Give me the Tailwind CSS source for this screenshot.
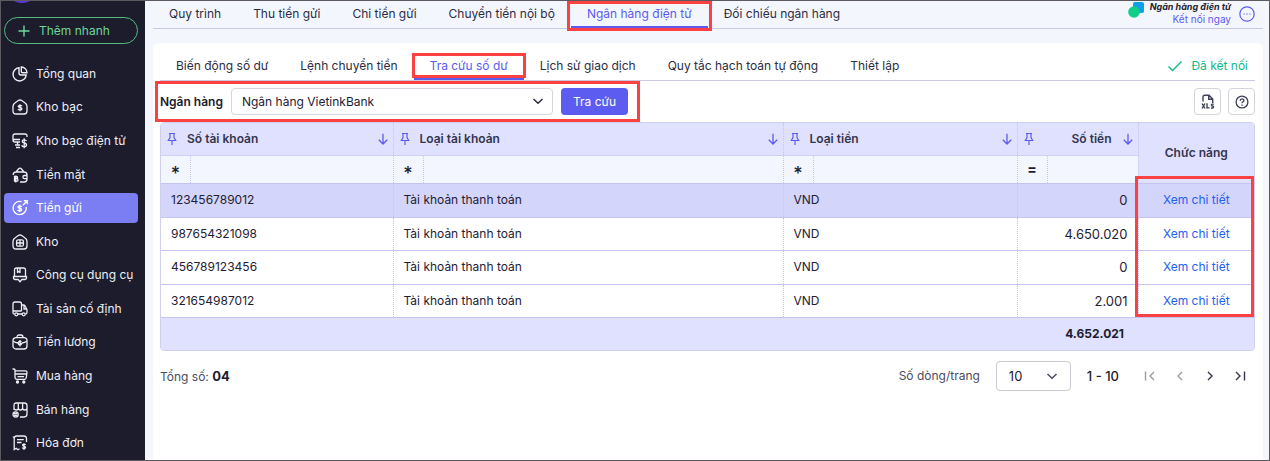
<!DOCTYPE html>
<html lang="vi">
<head>
    <meta charset="UTF-8">
    <meta name="viewport" content="width=device-width, initial-scale=1.0">
    <title>Ngân hàng điện tử - Tra cứu số dư</title>
    <script src="https://cdn.jsdelivr.net/npm/@tailwindcss/browser@4"></script>
</head>
<body class="flex min-h-screen border border-[#5c5a5e] bg-[#f4f6fe] font-['Inter',sans-serif] text-xs leading-5 text-[#2b2d42]">

    <!-- Sidebar -->
    <aside class="relative flex w-36 shrink-0 flex-col overflow-hidden bg-[#1c1c2d] text-[#eeeef5]">
        <div class="absolute -top-8 left-1 size-[34px] rounded-full bg-[#5b35d6]"></div>
        <button class="mt-4 mr-[7px] mb-[13px] ml-[3px] flex h-[27px] shrink-0 items-center gap-2 rounded-full border border-[#56bd80] pl-3 text-[#6fd79a]">
            <svg class="size-3.5" viewBox="0 0 14 14" fill="none" stroke="currentColor" stroke-width="1.4"><path d="M7 1.5v11M1.5 7h11"/></svg>
            Thêm nhanh
        </button>
        <nav class="flex flex-1 flex-col pr-[7px] pl-[3px]">
            <a href="#" class="my-0.5 flex flex-1 items-center gap-2 rounded pl-2">
                <svg class="size-4" viewBox="0 0 16 16" fill="none" stroke="currentColor" stroke-width="1.4"><path d="M7 1.800A6.600 6.600 0 1 0 14.200 9H9C7.700 9 7 8.300 7 7z"/><path d="M9.300 1v4.400c0 .8.400 1.300 1.300 1.300H15A6 6 0 0 0 9.300 1z"/></svg>
                Tổng quan
            </a>
            <a href="#" class="my-0.5 flex flex-1 items-center gap-2 rounded pl-2">
                <svg class="size-4" viewBox="0 0 16 16" fill="none" stroke="currentColor" stroke-width="1.3"><path d="M1 7.2C1 5.5 2 4.5 3.2 3.7L6.3 1.5c1.2-.7 2.2-.7 3.4 0l3.1 2.2C14 4.500 15 5.500 15 7.200V12c0 2-1 3-3 3H4c-2 0-3-1-3-3z"/><path d="M10 7.200C9.600 6.500 9 6.300 8 6.300c-2.300 0-2.400 2 0 2.200 2.600.3 2.500 2.500 0 2.500-1.200 0-1.800-.3-2.100-1M8 5.200v7"/></svg>
                Kho bạc
            </a>
            <a href="#" class="my-0.5 flex flex-1 items-center gap-2 rounded pl-2">
                <svg class="size-4" viewBox="0 0 16 16" fill="none" stroke="currentColor" stroke-width="1.3"><path d="M15 4V3c0-1.300-.7-2-2-2H3C1.700 1 1 1.700 1 3v4c0 1.300.7 2 2 2h5M1 6.500h7M5.500 9v3M3 12h5M4 14.500h4"/><path d="M14.500 8c-.5-.9-1.200-1.200-2.300-1.200-2.700 0-2.700 2.800 0 3.200 3.200.5 3 3.800 0 3.800-1.400 0-2.200-.5-2.500-1.500M12.200 5.300v10"/></svg>
                Kho bạc điện tử
            </a>
            <a href="#" class="my-0.5 flex flex-1 items-center gap-2 rounded pl-2">
                <svg class="size-4" viewBox="0 0 16 16" fill="none" stroke="currentColor" stroke-width="1.3"><path d="M1.200 8C1.200 6 2.500 5 4 5h8c2 0 3 1 3 3v4c0 2-1 3-3 3H8M4 5l2.500-3c1-1.200 2-1.200 3 0L12 5M15 8.500h-2.500a1.600 1.600 0 0 0 0 3.200H15"/><path d="M2.500 9.500h2c1.500 0 1.500 2.200 0 2.200h-2zM2.500 11.700h2.300c1.600 0 1.600 2.500 0 2.500H2.500zM3.800 8.500v7"/></svg>
                Tiền mặt
            </a>
            <a href="#" aria-current="page" class="my-0.5 flex flex-1 items-center gap-2 rounded bg-[#7b7df3] pl-2 text-white">
                <svg class="size-4" viewBox="0 0 16 16" fill="none" stroke="currentColor" stroke-width="1.400"><path d="M9.500 1.700A6.600 6.600 0 1 0 14.200 7"/><path d="M10.800 5.200l4-4M11.800.8H15.200V4.200"/><path d="M9.700 7c-.4-.8-1-1-2-1-2.300 0-2.300 2 0 2.300 2.600.3 2.500 2.600 0 2.600-1.200 0-1.800-.3-2.100-1M7.700 4.800v7.200"/></svg>
                Tiền gửi
            </a>
            <a href="#" class="my-0.5 flex flex-1 items-center gap-2 rounded pl-2">
                <svg class="size-4" viewBox="0 0 16 16" fill="none" stroke="currentColor" stroke-width="1.300"><path d="M1 7.200C1 5.500 2 4.500 3.200 3.700L6.300 1.500c1.200-.7 2.200-.7 3.400 0l3.100 2.200C14 4.500 15 5.500 15 7.200V12c0 2-1 3-3 3H4c-2 0-3-1-3-3z"/><rect x="4.600" y="5.800" width="6.800" height="6.400" rx="1.500"/><path d="M8 5.800v6.400M4.600 9h6.800"/></svg>
                Kho
            </a>
            <a href="#" class="my-0.5 flex flex-1 items-center gap-2 rounded pl-2">
                <svg class="size-4" viewBox="0 0 16 16" fill="none" stroke="currentColor" stroke-width="1.300" stroke-linejoin="round"><path d="M2.500 9V3c0-1.300.7-2 2-2h7c1.300 0 2 .7 2 2v6M5.500 1v4.500l1.300-1 1.200 1V1M1.500 9.500h13v1.300c0 1-.7 1.700-1.700 1.700H9.800L8 14.800l-1.800-2.300h-3c-1 0-1.700-.7-1.700-1.700z"/></svg>
                Công cụ dụng cụ
            </a>
            <a href="#" class="my-0.5 flex flex-1 items-center gap-2 rounded pl-2">
                <svg class="size-4" viewBox="0 0 16 16" fill="none" stroke="currentColor" stroke-width="1.300"><path d="M2.500 13C1.500 13 1 12.400 1 11.500V3c0-1.300.7-2 2-2h4.500c1.300 0 2 .7 2 2v7M1 10h8.500M9.500 4h2c.8 0 1.200.3 1.600 1l1.500 2.800c.3.500.4.800.4 1.400v2c0 1.200-.6 1.800-1.500 1.800M12 4v4h2.700M6 13h4"/><circle cx="4.300" cy="13.300" r="1.500"/><circle cx="11.700" cy="13.300" r="1.500"/></svg>
                Tài sản cố định
            </a>
            <a href="#" class="my-0.5 flex flex-1 items-center gap-2 rounded pl-2">
                <svg class="size-4" viewBox="0 0 16 16" fill="none" stroke="currentColor" stroke-width="1.300"><rect x="1" y="3.700" width="14" height="11.300" rx="3"/><path d="M5 3.500C5 1.700 5.600 1 7 1h2c1.400 0 2 .7 2 2.500M1.200 7.300c1.600 1 3 1.500 4.800 1.700M14.800 7.300c-1.600 1-3 1.500-4.800 1.700"/><path d="M9.300 8c-.8-1.200-3-.9-3 1.200s2.600 2.300 3.100.8V9.400H8M8 6v6.500"/></svg>
                Tiền lương
            </a>
            <a href="#" class="my-0.5 flex flex-1 items-center gap-2 rounded pl-2">
                <svg class="size-4" viewBox="0 0 16 16" fill="none" stroke="currentColor" stroke-width="1.300"><path d="M.5 1h1.300c.8 0 1.200.4 1.200 1.200V9.500c0 1.200.7 1.800 1.800 1.800h7.800c1 0 1.500-.5 1.600-1.500L15 4.500c0-1-.4-1.600-1.500-1.600H3.200M3.200 6h11.500M5.500 8.700h6.500"/><circle cx="5.500" cy="14" r="1" fill="currentColor"/><circle cx="11.800" cy="14" r="1" fill="currentColor"/></svg>
                Mua hàng
            </a>
            <a href="#" class="my-0.5 flex flex-1 items-center gap-2 rounded pl-2">
                <svg class="size-4" viewBox="0 0 16 16" fill="none" stroke="currentColor" stroke-width="1.300"><path d="M2 8V3.500C2 1.800 2.700 1 4.300 1h7.900C14 1 15 1.800 15 3.500v8.300c0 2.200-1 3.200-3 3.200H8M6.300 1v5c0 1.300-.8 2-2 2S2 7.300 2 6M6.300 6c0 1.300.8 2 2.100 2s2.200-.7 2.200-2V1M10.600 6c0 1.300.8 2 2.200 2S15 7.300 15 6"/><circle cx="3.600" cy="12.400" r="2.600"/><path d="M2 11.500h3.300M2 13.300h3.300"/></svg>
                Bán hàng
            </a>
            <a href="#" class="my-0.5 flex flex-1 items-center gap-2 rounded pl-2">
                <svg class="size-4" viewBox="0 0 16 16" fill="none" stroke="currentColor" stroke-width="1.300"><path d="M14.500 7V3.500C14.500 2 13.700 1 12 1H4.500C3 1 2.200 1.800 2.200 3.300V14.500l2-1.300 1.700 1.500 1.600-1M.8 2.200H2.200M5 4.700h6.800M5 7.500h4.500"/><path d="M13.500 10c-.3-.6-.8-.8-1.500-.8-1.900 0-1.800 1.700 0 2 2 .3 2 2.300 0 2.300-.9 0-1.500-.3-1.700-1M12 8.200v6.800"/></svg>
                Hóa đơn
            </a>
        </nav>
    </aside>

    <main class="flex min-w-0 flex-1 flex-col pr-1.5 pl-2">
        <!-- Main tabs -->
        <header class="flex h-7 items-stretch border-b border-[#c9cadf]">
            <nav class="flex">
                <a href="#" class="px-4 pt-[3px]">Quy trình</a>
                <a href="#" class="px-4 pt-[3px]">Thu tiền gửi</a>
                <a href="#" class="px-4 pt-[3px]">Chi tiền gửi</a>
                <a href="#" class="px-4 pt-[3px]">Chuyển tiền nội bộ</a>
                <a href="#" aria-current="page" class="relative border-b-2 border-[#5b5bf0] px-4 pt-[3px] text-[#5b5bf0]">
                    Ngân hàng điện tử
                    <span class="pointer-events-none absolute -inset-x-1 top-0 -bottom-[5px] border-3 border-[#fb4142]"></span>
                </a>
                <a href="#" class="px-4 pt-[3px]">Đối chiếu ngân hàng</a>
            </nav>
            <div class="ml-auto flex items-start gap-2 pr-2">
                <svg class="mt-px size-4" viewBox="0 0 16 16"><rect x="5" width="11" height="11" rx="2" fill="#119fe6"/><circle cx="6" cy="10" r="5.800" fill="#0fce87"/></svg>
                <div class="-ml-0.5 text-right">
                    <div class="text-[9px] leading-3 font-bold text-[#242432] italic">Ngân hàng điện tử</div>
                    <a href="#" class="block text-[10px] leading-3 text-[#5b5bf0]">Kết nối ngay</a>
                </div>
                <button aria-label="Thêm" class="mt-[5px] text-[#5b5bf0]">
                    <svg class="size-4" viewBox="0 0 16 16" fill="none" stroke="currentColor" stroke-width="1.200"><circle cx="8" cy="8" r="7.200"/><path d="M4.500 8h1.200M7.400 8h1.200M10.300 8h1.200"/></svg>
                </button>
            </div>
        </header>

        <section class="mt-3.5 flex-1 rounded-t-md bg-white pr-2 pl-[7px]">
            <!-- Sub tabs -->
            <div class="flex h-[38px] border-b border-[#c9cadf]">
                <nav class="flex">
                    <a href="#" class="px-4 pt-[13px]">Biến động số dư</a>
                    <a href="#" class="px-4 pt-[13px]">Lệnh chuyển tiền</a>
                    <a href="#" aria-current="page" class="relative border-b-2 border-[#5b5bf0] px-4 pt-[13px] text-[#5b5bf0]">
                        Tra cứu số dư
                        <span class="pointer-events-none absolute -inset-x-0.5 top-2.5 bottom-0 border-3 border-[#fb4142]"></span>
                    </a>
                    <a href="#" class="px-4 pt-[13px]">Lịch sử giao dịch</a>
                    <a href="#" class="px-4 pt-[13px]">Quy tắc hạch toán tự động</a>
                    <a href="#" class="px-4 pt-[13px]">Thiết lập</a>
                </nav>
                <div class="ml-auto flex items-center gap-2 pt-2 pr-[7px] text-[#0fb98b]">
                    <svg class="size-4" viewBox="0 0 16 16" fill="none" stroke="currentColor" stroke-width="1.400"><path d="M1.500 8.500l4 4 9-9"/></svg>
                    Đã kết nối
                </div>
            </div>

            <!-- Filter -->
            <div class="flex items-center justify-between py-[7px]">
                <div class="relative flex items-center">
                    <label for="bank" class="mr-2 font-semibold text-[#1b1c2e]">Ngân hàng</label>
                    <div class="relative">
                        <select id="bank" class="h-[27px] w-[322px] appearance-none rounded border border-[#d5d6de] bg-white px-2.5 text-[#1f2033]">
                            <option>Ngân hàng VietinkBank</option>
                        </select>
                        <svg class="pointer-events-none absolute top-1.5 right-2 size-3.5" viewBox="0 0 14 14" fill="none" stroke="currentColor" stroke-width="1.500"><path d="M2.500 5L7 9.300 11.500 5"/></svg>
                    </div>
                    <button class="ml-2 h-[27px] rounded bg-[#5c5cf0] px-3 text-white">Tra cứu</button>
                    <span class="pointer-events-none absolute -inset-x-3 -inset-y-[7px] -left-[5px] border-3 border-[#fb4142]"></span>
                </div>
                <div class="flex gap-[7px]">
                    <button aria-label="Xuất Excel" class="flex size-[27px] items-center justify-center rounded border border-[#d3d4dc]">
                        <svg class="size-4" viewBox="0 0 16 16" fill="none" stroke="#3d4057" stroke-width="1.400"><path d="M3 7.500V3c0-1.200.6-1.800 1.800-1.800H9L12.700 5v4M8.700 1.200V5.300h4"/><path d="M2 9.500l3 5M5 9.500l-3 5M7 9.200v4.700h2.500M13.800 10.100h-1.300c-1.500 0-1.500 1.900 0 1.900s1.500 2 0 2H11"/></svg>
                    </button>
                    <button aria-label="Trợ giúp" class="flex size-[27px] items-center justify-center rounded border border-[#d3d4dc]">
                        <svg class="size-3.5" viewBox="0 0 14 14" fill="none" stroke="#3d4057" stroke-width="1.300"><circle cx="7" cy="7" r="5.900"/><path d="M5.200 5.700c0-2.500 3.700-2.500 3.700-.2C8.900 6.800 7 6.800 7 8.300M7 9.500v1.200"/></svg>
                    </button>
                </div>
            </div>

            <!-- Balance table -->
            <div class="relative overflow-hidden rounded border border-[#cfd0ee]">
                <table class="w-full table-fixed border-collapse">
                    <colgroup>
                        <col class="w-[232px]">
                        <col>
                        <col class="w-[234px]">
                        <col class="w-[121px]">
                        <col class="w-[116px]">
                    </colgroup>
                    <thead class="bg-[#e0e1fe] text-left text-[#33354e]">
                        <tr class="h-8">
                            <th class="border-r border-dotted border-[#c4c5f3] px-1 font-semibold">
                                <div class="flex items-center">
                                    <svg class="mr-2 size-3.5 text-[#5b5bf0]" viewBox="0 0 14 14" fill="none" stroke="currentColor" stroke-width="1.200"><path d="M4 1.500h6M5 1.500v4L3.300 8.500h7.400L9 5.500v-4M7 8.500v4.500"/></svg>
                                    Số tài khoản
                                    <svg class="ml-auto size-3 text-[#5b5bf0]" viewBox="0 0 12 12" fill="none" stroke="currentColor" stroke-width="1.300"><path d="M6 .8v10M1.800 6.800L6 11l4.200-4.200"/></svg>
                                </div>
                            </th>
                            <th class="border-r border-dotted border-[#c4c5f3] px-1 font-semibold">
                                <div class="flex items-center">
                                    <svg class="mr-2 size-3.5 text-[#5b5bf0]" viewBox="0 0 14 14" fill="none" stroke="currentColor" stroke-width="1.200"><path d="M4 1.500h6M5 1.500v4L3.300 8.500h7.400L9 5.500v-4M7 8.500v4.500"/></svg>
                                    Loại tài khoản
                                    <svg class="ml-auto size-3 text-[#5b5bf0]" viewBox="0 0 12 12" fill="none" stroke="currentColor" stroke-width="1.300"><path d="M6 .8v10M1.800 6.800L6 11l4.200-4.200"/></svg>
                                </div>
                            </th>
                            <th class="border-r border-dotted border-[#c4c5f3] px-1 font-semibold">
                                <div class="flex items-center">
                                    <svg class="mr-2 size-3.5 text-[#5b5bf0]" viewBox="0 0 14 14" fill="none" stroke="currentColor" stroke-width="1.200"><path d="M4 1.500h6M5 1.500v4L3.300 8.500h7.400L9 5.500v-4M7 8.500v4.500"/></svg>
                                    Loại tiền
                                    <svg class="ml-auto size-3 text-[#5b5bf0]" viewBox="0 0 12 12" fill="none" stroke="currentColor" stroke-width="1.300"><path d="M6 .8v10M1.800 6.800L6 11l4.200-4.200"/></svg>
                                </div>
                            </th>
                            <th class="border-r border-dotted border-[#c4c5f3] px-1 font-semibold">
                                <div class="flex items-center">
                                    <svg class="mr-auto size-3.5 text-[#5b5bf0]" viewBox="0 0 14 14" fill="none" stroke="currentColor" stroke-width="1.200"><path d="M4 1.500h6M5 1.500v4L3.300 8.500h7.400L9 5.500v-4M7 8.500v4.500"/></svg>
                                    Số tiền
                                    <svg class="ml-2.5 size-3 text-[#5b5bf0]" viewBox="0 0 12 12" fill="none" stroke="currentColor" stroke-width="1.300"><path d="M6 .8v10M1.800 6.800L6 11l4.200-4.200"/></svg>
                                </div>
                            </th>
                            <th rowspan="2" class="text-center font-semibold">Chức năng</th>
                        </tr>
                        <tr class="h-7 border-t border-[#cfd0f4] bg-[#f3f6fe]">
                            <td class="border-r border-dotted border-r-[#c4c5f3] p-0">
                                <div class="flex h-[27px]">
                                    <button class="w-[30px] border-r border-dotted border-[#c4c5f3] pt-1 text-lg font-medium text-[#1b1c2e]">*</button>
                                    <input type="text" aria-label="Lọc số tài khoản" class="min-w-0 flex-1 px-2 outline-none">
                                </div>
                            </td>
                            <td class="border-r border-dotted border-r-[#c4c5f3] p-0">
                                <div class="flex h-[27px]">
                                    <button class="w-[30px] border-r border-dotted border-[#c4c5f3] pt-1 text-lg font-medium text-[#1b1c2e]">*</button>
                                    <input type="text" aria-label="Lọc loại tài khoản" class="min-w-0 flex-1 px-2 outline-none">
                                </div>
                            </td>
                            <td class="border-r border-dotted border-r-[#c4c5f3] p-0">
                                <div class="flex h-[27px]">
                                    <button class="w-[30px] border-r border-dotted border-[#c4c5f3] pt-1 text-lg font-medium text-[#1b1c2e]">*</button>
                                    <input type="text" aria-label="Lọc loại tiền" class="min-w-0 flex-1 px-2 outline-none">
                                </div>
                            </td>
                            <td class="border-r border-dotted border-r-[#c4c5f3] p-0">
                                <div class="flex h-[27px]">
                                    <button class="w-[30px] border-r border-dotted border-[#c4c5f3] text-sm font-bold text-[#1b1c2e]">=</button>
                                    <input type="text" aria-label="Lọc số tiền" class="min-w-0 flex-1 px-2 outline-none">
                                </div>
                            </td>
                        </tr>
                    </thead>
                    <tbody class="text-[#1f2033]">
                        <tr class="border-y border-[#c4c5f3] bg-[#d4d5fb] odd:h-[34px] even:h-[33px]">
                            <td class="border-r border-dotted border-r-[#c4c5f3] px-2.5">123456789012</td>
                            <td class="border-r border-dotted border-r-[#c4c5f3] px-2.5">Tài khoản thanh toán</td>
                            <td class="border-r border-dotted border-r-[#c4c5f3] px-2.5">VND</td>
                            <td class="border-r border-dotted border-r-[#c4c5f3] px-2.5 text-right text-[13px]">0</td>
                            <td class="text-center"><a href="#" class="text-[#1d62f0]">Xem chi tiết</a></td>
                        </tr>
                        <tr class="border-y border-[#c4c5f3] odd:h-[34px] even:h-[33px]">
                            <td class="border-r border-dotted border-r-[#c4c5f3] px-2.5">987654321098</td>
                            <td class="border-r border-dotted border-r-[#c4c5f3] px-2.5">Tài khoản thanh toán</td>
                            <td class="border-r border-dotted border-r-[#c4c5f3] px-2.5">VND</td>
                            <td class="border-r border-dotted border-r-[#c4c5f3] px-2.5 text-right text-[13px]">4.650.020</td>
                            <td class="text-center"><a href="#" class="text-[#1d62f0]">Xem chi tiết</a></td>
                        </tr>
                        <tr class="border-y border-[#c4c5f3] odd:h-[34px] even:h-[33px]">
                            <td class="border-r border-dotted border-r-[#c4c5f3] px-2.5">456789123456</td>
                            <td class="border-r border-dotted border-r-[#c4c5f3] px-2.5">Tài khoản thanh toán</td>
                            <td class="border-r border-dotted border-r-[#c4c5f3] px-2.5">VND</td>
                            <td class="border-r border-dotted border-r-[#c4c5f3] px-2.5 text-right text-[13px]">0</td>
                            <td class="text-center"><a href="#" class="text-[#1d62f0]">Xem chi tiết</a></td>
                        </tr>
                        <tr class="border-y border-[#c4c5f3] odd:h-[34px] even:h-[33px]">
                            <td class="border-r border-dotted border-r-[#c4c5f3] px-2.5">321654987012</td>
                            <td class="border-r border-dotted border-r-[#c4c5f3] px-2.5">Tài khoản thanh toán</td>
                            <td class="border-r border-dotted border-r-[#c4c5f3] px-2.5">VND</td>
                            <td class="border-r border-dotted border-r-[#c4c5f3] px-2.5 text-right text-[13px]">2.001</td>
                            <td class="text-center"><a href="#" class="text-[#1d62f0]">Xem chi tiết</a></td>
                        </tr>
                    </tbody>
                    <tfoot>
                        <tr class="h-[33px] bg-[#e0e1fe] font-bold text-[#1b1c2e]">
                            <td colspan="4" class="px-3.5 text-right">4.652.021</td>
                            <td></td>
                        </tr>
                    </tfoot>
                </table>
                <span class="pointer-events-none absolute right-0 bottom-[33px] h-[141px] w-[119px] border-3 border-[#fb4142]"></span>
            </div>

            <!-- Paging -->
            <div class="mt-2.5 flex items-center justify-between text-[#4a4c60]">
                <div>Tổng số: <b class="text-[13px] font-bold text-[#1b1c2e]">04</b></div>
                <div class="flex items-center">
                    <label for="size" class="mr-4">Số dòng/trang</label>
                    <div class="relative">
                        <select id="size" class="h-[30px] w-[75px] appearance-none rounded border border-[#c9cad6] bg-white px-3 text-[13px] text-[#1f2033]">
                            <option>10</option>
                            <option>20</option>
                            <option>50</option>
                        </select>
                        <svg class="pointer-events-none absolute top-2 right-3 size-3.5" viewBox="0 0 14 14" fill="none" stroke="currentColor" stroke-width="1.500"><path d="M2.500 5L7 9.300 11.500 5"/></svg>
                    </div>
                    <span class="ml-4 text-[13px] font-medium text-[#1b1c2e]">1 - 10</span>
                    <div class="ml-6 flex gap-4 pr-2">
                        <button aria-label="Trang đầu" class="text-[#9a9bab]"><svg class="size-3.5" viewBox="0 0 14 14" fill="none" stroke="currentColor" stroke-width="1.400"><path d="M2.500 2.500v9M11 3L7 7l4 4"/></svg></button>
                        <button aria-label="Trang trước" class="text-[#9a9bab]"><svg class="size-3.5" viewBox="0 0 14 14" fill="none" stroke="currentColor" stroke-width="1.400"><path d="M9 3L5 7l4 4"/></svg></button>
                        <button aria-label="Trang sau" class="text-[#33354e]"><svg class="size-3.5" viewBox="0 0 14 14" fill="none" stroke="currentColor" stroke-width="1.400"><path d="M5 3l4 4-4 4"/></svg></button>
                        <button aria-label="Trang cuối" class="text-[#33354e]"><svg class="size-3.5" viewBox="0 0 14 14" fill="none" stroke="currentColor" stroke-width="1.400"><path d="M3 3l4 4-4 4M11.500 2.500v9"/></svg></button>
                    </div>
                </div>
            </div>
        </section>
    </main>
</body>
</html>
